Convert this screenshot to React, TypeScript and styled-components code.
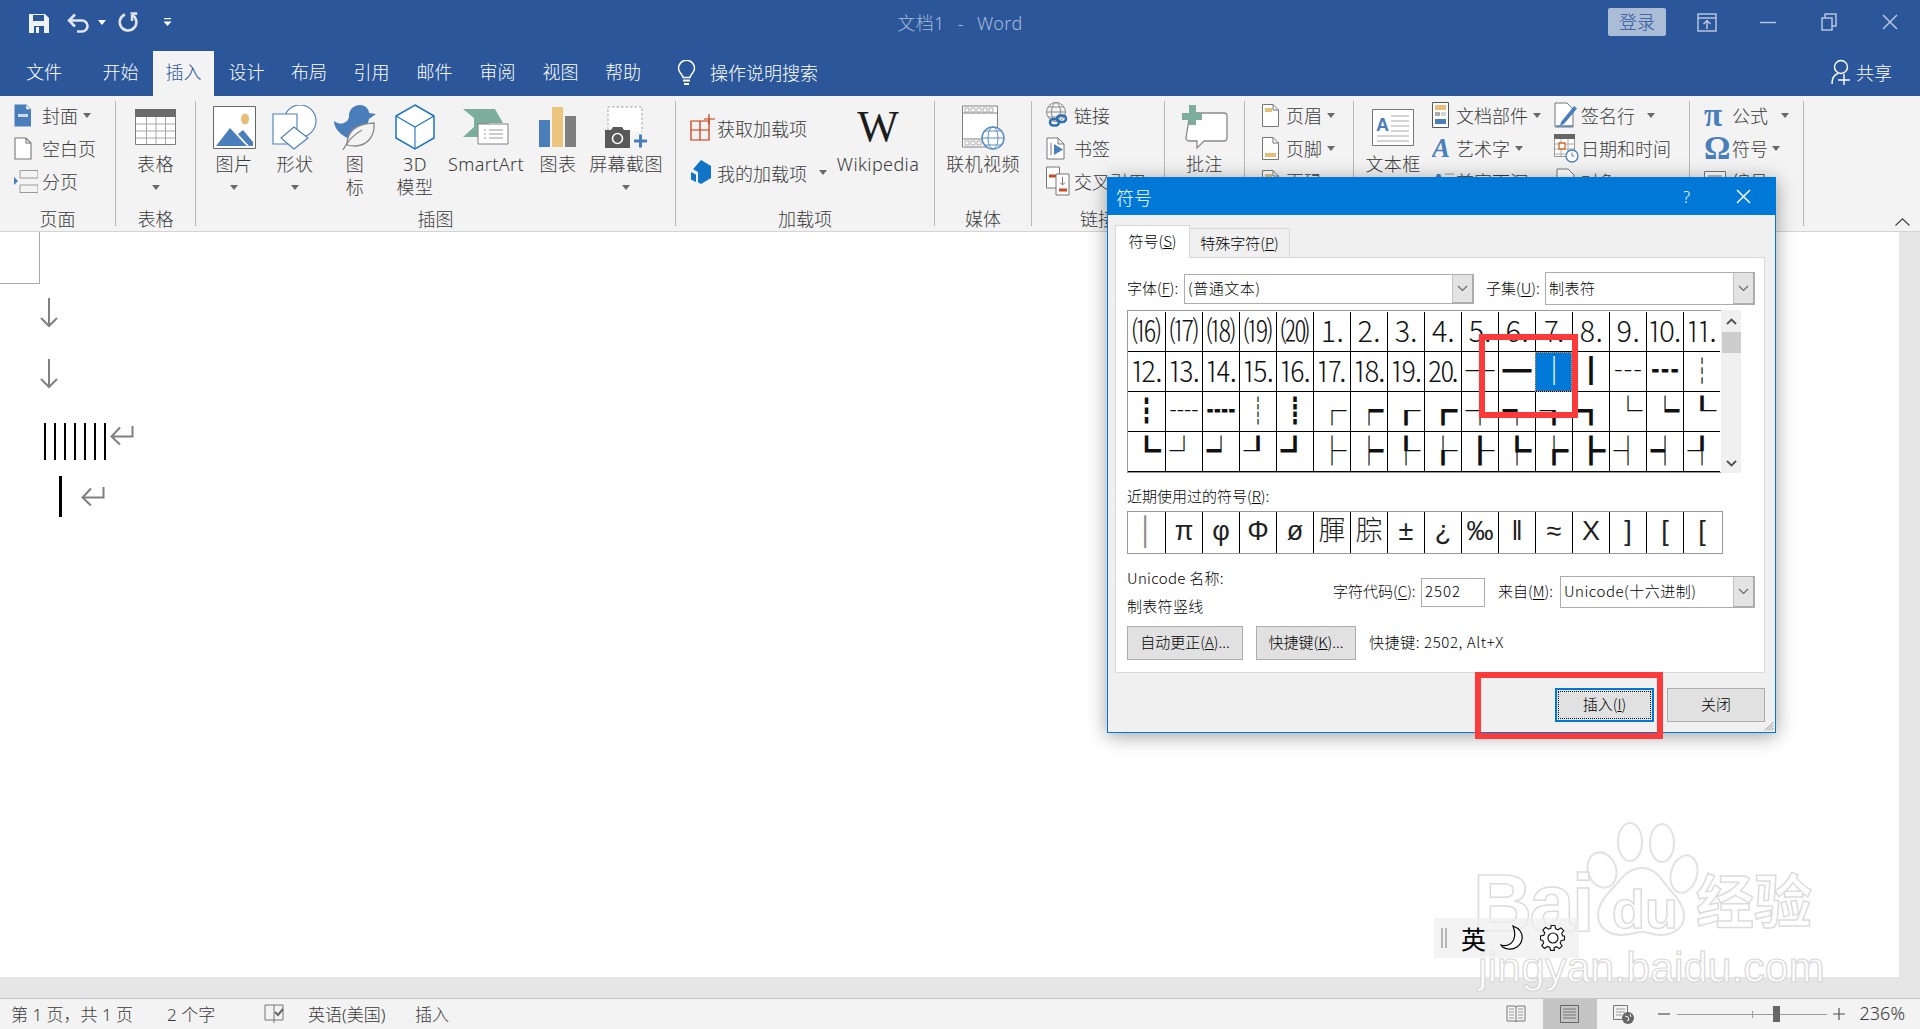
import React from "react";
import styled, { createGlobalStyle } from "styled-components";

const BLUE = "#4a7ebb";
const UI = `"Noto Sans", "Noto Sans CJK SC", sans-serif`;
const CJK = `"Noto Sans CJK SC", "Noto Sans", sans-serif`;

const Global = createGlobalStyle`
  html, body { margin: 0; padding: 0; background: #fff; overflow: hidden; }
  * { box-sizing: border-box; }
  svg { display: block; flex: none; }
`;

const Root = styled.div`
  position: relative;
  width: 1920px;
  height: 1029px;
  overflow: hidden;
  display: flex;
  flex-direction: column;
  font-family: ${UI};
  font-weight: 300;
  color: #3a3a3a;
`;

/* ---------- title bar ---------- */
const TitleBar = styled.div`
  height: 51px;
  background: #2b579a;
  display: grid;
  grid-template-columns: 1fr auto 1fr;
  align-items: center;
`;
const Qat = styled.div`
  display: flex;
  align-items: center;
  padding-left: 29px;
  margin-top: -6px;
`;
const QatSlot = styled.div<{ $ml: number }>`
  margin-left: ${(p) => p.$ml}px;
`;
const DocTitle = styled.div`
  color: #a6b9d6;
  font-size: 18px;
  margin-top: -7px;
  word-spacing: 8px;
  letter-spacing: 0.4px;
`;
const WinControls = styled.div`
  display: flex;
  align-items: center;
  justify-content: flex-end;
  margin-top: -7px;
`;
const LoginBtn = styled.div`
  width: 58px;
  height: 28px;
  background: #aabcd6;
  border-radius: 2px;
  color: #2b579a;
  font-size: 18px;
  line-height: 28px;
  text-align: center;
  margin-right: 10px;
`;
const WinSlot = styled.div`
  width: 61px;
  display: flex;
  justify-content: center;
`;

/* ---------- tabs ---------- */
const TabBar = styled.div`
  height: 45px;
  background: #2b579a;
  display: flex;
  align-items: stretch;
  color: #fff;
  font-size: 18px;
`;
const Tab = styled.div<{ $w: number; $active?: boolean }>`
  width: ${(p) => p.$w}px;
  text-align: center;
  line-height: 42px;
  background: ${(p) => (p.$active ? "#f3f3f3" : "transparent")};
  color: ${(p) => (p.$active ? "#2b579a" : "#fff")};
`;
const Search = styled.div`
  display: flex;
  align-items: center;
  height: 42px;
  margin-left: 22px;
  gap: 14px;
`;
const Share = styled.div`
  margin-left: auto;
  display: flex;
  align-items: center;
  height: 42px;
  gap: 6px;
  padding-right: 28px;
`;

/* ---------- ribbon ---------- */
const Ribbon = styled.div`
  height: 136px;
  background: #f3f3f3;
  border-bottom: 1px solid #d4d4d4;
  display: flex;
  padding-top: 5px;
  font-size: 18px;
  white-space: nowrap;
`;
const Group = styled.div<{ $w: number }>`
  width: ${(p) => p.$w}px;
  height: 125px;
  border-right: 1px solid #b9b9b9;
  display: flex;
  flex-direction: column;
  flex: none;
`;
const GroupBody = styled.div`
  height: 108px;
  flex: none;
  display: flex;
`;
const GroupLabel = styled.div`
  height: 20px;
  flex: none;
  line-height: 20px;
  text-align: center;
`;
const RibbonEnd = styled.div`
  flex: 1;
  height: 125px;
  display: flex;
  align-items: flex-end;
  padding: 0 0 0 91px;
`;
const SmallCol = styled.div<{ $w?: number; $pl?: number }>`
  display: flex;
  flex-direction: column;
  width: ${(p) => (p.$w ? `${p.$w}px` : "auto")};
  padding-left: ${(p) => p.$pl ?? 0}px;
  flex: none;
`;
const SmallRow = styled.div`
  height: 33px;
  padding-bottom: 5px;
  display: flex;
  align-items: center;
`;
const IconSlot = styled.div<{ $w: number }>`
  width: ${(p) => p.$w}px;
  flex: none;
  display: flex;
  align-items: center;
`;
const Caret = styled.span<{ $ml?: number }>`
  display: inline-block;
  width: 0;
  height: 0;
  border-left: 4.5px solid transparent;
  border-right: 4.5px solid transparent;
  border-top: 5px solid #6a6a6a;
  margin-left: ${(p) => p.$ml ?? 5}px;
`;
const Large = styled.div<{ $w: number }>`
  width: ${(p) => p.$w}px;
  flex: none;
  display: flex;
  flex-direction: column;
  align-items: center;
`;
const LargeIcon = styled.div`
  height: 52px;
  flex: none;
  display: flex;
  align-items: center;
  justify-content: center;
`;
const LargeLine = styled.div`
  height: 23px;
  flex: none;
  line-height: 23px;
  text-align: center;
  display: flex;
  align-items: center;
  letter-spacing: 0.4px;
`;
const TallRow = styled.div`
  height: 45px;
  display: flex;
  align-items: center;
`;
const AddinCol = styled.div`
  width: 162px;
  padding: 4px 0 0 14px;
  flex: none;
`;
const WikiW = styled.div`
  font-family: "Liberation Serif", serif;
  font-size: 44px;
  font-weight: 400;
  color: #1c1c1c;
  line-height: 52px;
`;
const MathGlyph = styled.span`
  font-family: "Liberation Serif", serif;
  font-weight: 700;
  color: ${BLUE};
  font-size: 33px;
  line-height: 28px;
`;

/* ---------- document ---------- */
const Work = styled.div`
  height: 745px;
  flex: none;
  display: flex;
`;
const Page = styled.div`
  flex: 1;
  background: #fff;
`;
const VScroll = styled.div`
  width: 21px;
  background: #e6e6e6;
`;
const HScroll = styled.div`
  height: 21px;
  flex: none;
  background: #e6e6e6;
`;
const Corner = styled.div`
  width: 40px;
  height: 52px;
  border-right: 1px solid #aaa;
  border-bottom: 1px solid #aaa;
`;
const ArrowLine = styled.div<{ $mt: number; $h: number }>`
  margin: ${(p) => p.$mt}px 0 0 40px;
  height: ${(p) => p.$h}px;
`;
const BarLine = styled.div<{ $h: number; $ml: number; $gap: number; $mt?: number }>`
  height: ${(p) => p.$h}px;
  margin: ${(p) => p.$mt ?? 0}px 0 0 ${(p) => p.$ml}px;
  display: flex;
  gap: ${(p) => p.$gap}px;
  align-items: flex-start;
`;
const Bar = styled.div<{ $w: number; $h: number }>`
  width: ${(p) => p.$w}px;
  height: ${(p) => p.$h}px;
  background: #000;
`;
const ReturnSlot = styled.div<{ $ml: number; $mt: number }>`
  margin: ${(p) => p.$mt}px 0 0 ${(p) => p.$ml}px;
`;

/* ---------- status bar ---------- */
const Status = styled.div`
  height: 31px;
  flex: none;
  background: #f3f3f3;
  border-top: 1px solid #c6c6c6;
  display: flex;
  align-items: center;
  font-size: 17px;
  white-space: nowrap;
`;
const StatusItem = styled.div<{ $w: number; $pl?: number }>`
  width: ${(p) => p.$w}px;
  padding-left: ${(p) => p.$pl ?? 0}px;
  flex: none;
  display: flex;
  align-items: center;
  height: 100%;
  padding-bottom: 2px;
`;
const StatusRight = styled.div`
  margin-left: auto;
  display: flex;
  align-items: center;
  height: 100%;
  padding-right: 15px;
`;
const ViewBtn = styled.div<{ $active?: boolean }>`
  width: 54px;
  height: 100%;
  background: ${(p) => (p.$active ? "#c5c5c5" : "transparent")};
  display: flex;
  align-items: center;
  justify-content: center;
`;
const ZoomMinus = styled.div`
  margin-left: 7px;
`;
const ZoomTrack = styled.div`
  position: relative;
  width: 150px;
  height: 1px;
  background: #9d9d9d;
  margin: 0 6px 0 7px;
`;
const ZoomTick = styled.div`
  position: absolute;
  left: 75px;
  top: -3px;
  width: 1px;
  height: 7px;
  background: #9d9d9d;
`;
const ZoomThumb = styled.div`
  position: absolute;
  left: 96px;
  top: -8px;
  width: 7px;
  height: 16px;
  background: #666;
`;
const ZoomPct = styled.div`
  margin-left: 15px;
  font-size: 18px;
  padding-bottom: 2px;
`;

/* ---------- dialog ---------- */
const Dialog = styled.div`
  position: absolute;
  left: 1107px;
  top: 177px;
  width: 669px;
  height: 556px;
  background: #f0f0f0;
  border: 1px solid #0078d7;
  box-shadow: 0 3px 18px rgba(0, 0, 0, 0.38);
  color: #000;
  font-size: 15px;
  font-family: ${CJK};
  font-weight: 300;
  white-space: nowrap;
`;
const DlgTitle = styled.div`
  height: 37px;
  background: #0078d7;
  color: #fff;
  font-size: 18px;
  display: flex;
  align-items: center;
  padding-left: 8px;
`;
const DlgHelp = styled.div`
  margin-left: auto;
  font-family: ${UI};
  font-size: 16px;
  margin-right: 46px;
`;
const DlgClose = styled.div`
  margin-right: 24px;
`;
const DlgTabs = styled.div`
  display: flex;
  align-items: flex-end;
  height: 32px;
  margin: 10px 0 0 7px;
`;
const DlgTab = styled.div<{ $w: number; $active?: boolean }>`
  width: ${(p) => p.$w}px;
  height: ${(p) => (p.$active ? 33 : 30)}px;
  background: ${(p) => (p.$active ? "#fff" : "#f0f0f0")};
  border: 1px solid #d9d9d9;
  border-bottom: ${(p) => (p.$active ? "none" : "1px solid #d9d9d9")};
  border-left: ${(p) => (p.$active ? "1px solid #d9d9d9" : "none")};
  text-align: center;
  line-height: ${(p) => (p.$active ? 30 : 27)}px;
  position: relative;
  z-index: 1;
  margin-bottom: -1px;
`;
const Panel = styled.div`
  width: 650px;
  height: 416px;
  margin: 0 0 0 7px;
  background: #fff;
  border: 1px solid #d9d9d9;
  padding: 14px 0 0 11px;
`;
const FieldRow = styled.div`
  display: flex;
  align-items: center;
  height: 33px;
`;
const FieldLabel = styled.div<{ $w: number; $ml?: number }>`
  width: ${(p) => p.$w}px;
  margin-left: ${(p) => p.$ml ?? 0}px;
  flex: none;
  line-height: 20px;
  padding-bottom: 2px;
  u { text-underline-offset: 2px; }
`;
const Select = styled.div<{ $w: number; $h: number }>`
  width: ${(p) => p.$w}px;
  height: ${(p) => p.$h}px;
  border: 1px solid #adadad;
  background: #fff;
  display: flex;
  align-items: center;
  padding-left: 3px;
  flex: none;
  font-size: 15px;
  letter-spacing: 0.5px;
`;
const SelectText = styled.span`
  padding-bottom: 3px;
`;
const SelectArrow = styled.div`
  margin-left: auto;
  width: 21px;
  height: 100%;
  background: #e3e3e3;
  border-left: 1px solid #c2c2c2;
  border-right: 1px solid #adadad;
  border-bottom: 1px solid #adadad;
  display: flex;
  align-items: center;
  justify-content: center;
`;
const GridWrap = styled.div`
  display: flex;
  margin-top: 5px;
`;
const SymbolGrid = styled.div`
  width: 594px;
  height: 163px;
  border: 1px solid #9a9a9a;
  border-right: none;
  padding: 1px 0;
  display: grid;
  grid-template-columns: repeat(16, 37px);
  grid-auto-rows: 40px;
`;
const Cell = styled.div<{ $sel?: boolean }>`
  border-left: 1px solid ${(p) => (p.$sel ? "#0078d7" : "#000")};
  border-bottom: 1px solid #000;
  background: ${(p) => (p.$sel ? "#0078d7" : "#fff")};
  color: ${(p) => (p.$sel ? "#fff" : "#111")};
  outline: ${(p) => (p.$sel ? "1px dotted #e8964a" : "none")};
  outline-offset: -1px;
  font-family: ${CJK};
  font-size: 29px;
  font-weight: 300;
  height: 40px;
  line-height: 35px;
  text-align: center;
  &:nth-child(16n + 1) { border-left: none; }
`;
const GridScroll = styled.div`
  width: 20px;
  height: 163px;
  background: #f0f0f0;
  display: flex;
  flex-direction: column;
  align-items: center;
  padding-top: 8px;
`;
const GridThumb = styled.div`
  width: 19px;
  height: 21px;
  background: #cdcdcd;
  margin-top: 7px;
`;
const GridDown = styled.div`
  margin-top: auto;
  padding-bottom: 6px;
`;
const RecentLabel = styled.div`
  height: 18px;
  line-height: 16px;
  margin-top: 15px;
`;
const RecentRow = styled.div`
  width: 596px;
  height: 43px;
  margin-top: 5px;
  border: 1px solid #9a9a9a;
  display: grid;
  grid-template-columns: repeat(16, 37px);
`;
const RecentCell = styled.div<{ $gray?: boolean }>`
  border-left: 1px solid #000;
  color: ${(p) => (p.$gray ? "#888" : "#222")};
  font-family: "Liberation Sans", ${CJK};
  font-size: 27px;
  line-height: 38px;
  height: 41px;
  text-align: center;
  &:first-child { border-left: none; }
`;
const InfoRow = styled.div`
  display: flex;
  align-items: center;
  height: 48px;
  margin-top: 14px;
`;
const InfoLeft = styled.div`
  width: 206px;
  flex: none;
  display: flex;
  flex-direction: column;
  gap: 12px;
  line-height: 16px;
  letter-spacing: 0.3px;
`;
const CodeInput = styled.div`
  width: 64px;
  height: 29px;
  border: 1px solid #adadad;
  background: #fff;
  padding-left: 3px;
  line-height: 23px;
  font-size: 15px;
  letter-spacing: 1px;
  flex: none;
`;
const BtnRow = styled.div`
  display: flex;
  align-items: center;
  gap: 13px;
  height: 34px;
  margin-top: 10px;
`;
const DlgBtn = styled.div<{ $w: number }>`
  width: ${(p) => p.$w}px;
  height: 34px;
  background: #e1e1e1;
  border: 1px solid #adadad;
  text-align: center;
  line-height: 30px;
  flex: none;
`;
const DefaultBtn = styled(DlgBtn)`
  border: 2px solid #0078d7;
  outline: 1px dotted #111;
  outline-offset: -4px;
  line-height: 28px;
`;
const Shortcut = styled.div`
  letter-spacing: 0.6px;
  padding-bottom: 4px;
`;
const DlgFoot = styled.div`
  display: flex;
  justify-content: flex-end;
  gap: 13px;
  margin-top: 15px;
  padding-right: 10px;
`;
const Grip = styled.div`
  position: absolute;
  right: 1px;
  bottom: 1px;
`;

/* ---------- overlays ---------- */
const RedBox = styled.div<{ $x: number; $y: number; $w: number; $h: number }>`
  position: absolute;
  left: ${(p) => p.$x}px;
  top: ${(p) => p.$y}px;
  width: ${(p) => p.$w}px;
  height: ${(p) => p.$h}px;
  border: 6px solid #fc3a3a;
`;
const Ime = styled.div`
  position: absolute;
  left: 1434px;
  top: 918px;
  width: 145px;
  height: 40px;
  background: rgba(238, 238, 238, 0.72);
  display: flex;
  align-items: center;
  font-family: ${CJK};
  color: #000;
`;
const ImeGrip = styled.div`
  width: 6px;
  height: 20px;
  margin-left: 7px;
  border-left: 2px solid #b5b5b5;
  border-right: 2px solid #b5b5b5;
`;
const ImeChar = styled.div`
  font-size: 25px;
  margin-left: 14px;
  font-weight: 400;
`;
const ImeIcon = styled.div`
  margin-left: 14px;
`;
const Watermark = styled.div`
  position: absolute;
  left: 1470px;
  top: 820px;
  width: 360px;
  height: 170px;
  pointer-events: none;
`;
const WmPaw = styled.div`
  position: absolute;
  left: 102px;
  top: -2px;
`;
const WmText = styled.div<{ $x: number; $y: number; $fs: number }>`
  position: absolute;
  left: ${(p) => p.$x}px;
  top: ${(p) => p.$y}px;
  font-size: ${(p) => p.$fs}px;
  line-height: 1;
  font-family: "Liberation Sans", ${CJK};
  font-weight: 700;
  color: #fff;
  -webkit-text-stroke: 1.5px #dcdcdc;
  white-space: nowrap;
`;
const WmBai = styled(WmText)`
  letter-spacing: -3px;
`;
const WmThin = styled(WmText)`
  font-weight: 400;
  -webkit-text-stroke: 1.2px #d8d8d8;
`;

/* ---------- icons ---------- */
const Svg = ({ w, h, children }: { w: number; h: number; children: React.ReactNode }) => (
  <svg width={w} height={h} viewBox={`0 0 ${w} ${h}`} fill="none">
    {children}
  </svg>
);

const SaveIcon = () => (
  <Svg w={20} h={20}>
    <path d="M0 1h16l4 4v15H0z" fill="#eef1f6" />
    <path d="M4 2h11v6H4z" fill="#2b579a" />
    <path d="M5 13h10v7H5z" fill="#2b579a" />
    <path d="M7 14h3v6H7z" fill="#eef1f6" />
  </Svg>
);
const UndoIcon = () => (
  <Svg w={23} h={20}>
    <path d="M2 7.5h13a5.5 5.5 0 0 1 0 11H10M8 1.5 2 7.5l6 6" stroke="#dfe6f0" strokeWidth="2.6" />
  </Svg>
);
const RedoIcon = () => (
  <Svg w={20} h={21}>
    <path d="M7 2.5a8.3 8.3 0 1 0 7 .4" stroke="#dfe6f0" strokeWidth="2.6" />
    <path d="M12.5 1.5h5.5v1.5M14 3v6" stroke="#dfe6f0" strokeWidth="2.4" />
  </Svg>
);
const QatDown = () => (
  <Svg w={9} h={9}>
    <path d="M1 0.5h7" stroke="#fff" strokeWidth="1.4" />
    <path d="M0.5 3.5h8L4.5 8z" fill="#fff" />
  </Svg>
);
const SmallDown = () => (
  <Svg w={8} h={5}>
    <path d="M0 0h8L4 5z" fill="#fff" />
  </Svg>
);
const DisplayIcon = () => (
  <Svg w={20} h={19}>
    <path d="M1 1h18v17H1zM1 5h18" stroke="#b5c5dc" strokeWidth="1.5" />
    <path d="M10 16V8M6.5 11 10 7.5l3.5 3.5" stroke="#b5c5dc" strokeWidth="1.5" />
  </Svg>
);
const MinIcon = () => (
  <Svg w={16} h={3}>
    <path d="M0 1.5h16" stroke="#b5c5dc" strokeWidth="1.5" />
  </Svg>
);
const RestoreIcon = () => (
  <Svg w={16} h={18}>
    <path d="M1 5h10v12H1z" stroke="#b5c5dc" strokeWidth="1.5" />
    <path d="M4 5V1h11v12h-4" stroke="#b5c5dc" strokeWidth="1.5" />
  </Svg>
);
const CloseIcon = ({ c = "#b5c5dc", s = 16 }: { c?: string; s?: number }) => (
  <Svg w={s} h={s}>
    <path d={`M1 1 ${s - 1} ${s - 1}M${s - 1} 1 1 ${s - 1}`} stroke={c} strokeWidth="1.5" />
  </Svg>
);
const BulbIcon = () => (
  <Svg w={19} h={25}>
    <path d="M6 17.5c0-3-4.5-4.5-4.5-9.2a8 8 0 0 1 16 0c0 4.7-4.5 6.2-4.5 9.2z" stroke="#fff" strokeWidth="1.5" />
    <path d="M6 20.5h7M7 24h5" stroke="#fff" strokeWidth="2" />
  </Svg>
);
const PersonIcon = () => (
  <Svg w={19} h={26}>
    <circle cx="10" cy="8" r="6.5" stroke="#fff" strokeWidth="1.4" />
    <path d="M1 25c0-6 3-9.5 6-10.5" stroke="#fff" strokeWidth="1.4" />
    <path d="M7 21h12M13 15v11" stroke="#fff" strokeWidth="1.4" />
  </Svg>
);
const CoverIcon = () => (
  <Svg w={18} h={23}>
    <path d="M0.5 0.5H12l5 5v17H0.5z" fill={BLUE} />
    <path d="M12 0.5 17 5.5H12z" fill="#fff" stroke={BLUE} strokeWidth="0.6" />
    <path d="M4 10h10v3H4z" fill="#cfdcec" />
  </Svg>
);
const BlankIcon = () => (
  <Svg w={18} h={23}>
    <path d="M1 1h11l5 5v16H1zM12 1v5h5" stroke="#777" strokeWidth="1.1" fill="#fff" />
  </Svg>
);
const BreakIcon = () => (
  <Svg w={24} h={23}>
    <path d="M6 0.5h18M6 8h18M6 15h18M6 22.5h18" stroke="#9a9a9a" strokeWidth="1" />
    <path d="M6 0.5v7.5M24 0.5v7.5M6 15v8M24 15v8" stroke="#9a9a9a" strokeWidth="1" />
    <path d="M0 7v8l4-4z" fill={BLUE} />
  </Svg>
);
const TableIcon = () => (
  <Svg w={41} h={36}>
    <path d="M0.5 0.5h40v35h-40z" fill="#fff" stroke="#7f7f7f" />
    <path d="M0 0h41v8H0z" fill="#6b6b6b" />
    <path d="M1 15h39M1 22h39M1 29h39M11.5 8v27M21 8v27M30.5 8v27" stroke="#a6a6a6" />
  </Svg>
);
const PictureIcon = () => (
  <Svg w={43} h={43}>
    <path d="M0.5 0.5h42v42h-42z" fill="#fff" stroke="#666" />
    <ellipse cx="32" cy="13" rx="4" ry="5.5" fill="#e8bd7a" />
    <path d="M3 40 17 22l12 13 5 5z" fill={BLUE} />
    <path d="M25 28 30 24l10 12v4h-4z" fill={BLUE} />
  </Svg>
);
const ShapesIcon = () => (
  <Svg w={46} h={45}>
    <circle cx="28" cy="16" r="16" fill="#fff" stroke={BLUE} strokeWidth="1.1" />
    <path d="M1 9h24v30H1z" fill="#fff" stroke={BLUE} strokeWidth="1.1" />
    <path d="M22 22 36 33 22 44 9 33z" fill="#fff" stroke={BLUE} strokeWidth="1.1" />
  </Svg>
);
const IconsIcon = () => (
  <Svg w={42} h={46}>
    <path d="M0 17c4 3 7 3 10 2 2-1 5-3 5-7 0-6 4-11 11-11 5 0 9 4 9 8l7 1-7 5c-1 5-3 8-6 10-3 3-4 9-7 11-8 0-22-8-22-19z" fill={BLUE} />
    <path d="M13 41c0-12 7-21 27-22 1 13-6 22-18 23-3 0-6 0-9-1z" fill="#f3f3f3" stroke="#8a8a8a" strokeWidth="1.3" />
    <path d="M9 46c4-8 10-15 19-20" stroke="#8a8a8a" strokeWidth="1.3" />
  </Svg>
);
const CubeIcon = () => (
  <Svg w={40} h={46}>
    <path d="M20 1 39 12v22L20 45 1 34V12z" fill="#fff" stroke="#1f74bf" strokeWidth="1.5" />
    <path d="M1 12l19 11 19-11M20 23v22" stroke="#1f74bf" strokeWidth="1.1" />
  </Svg>
);
const SmartArtIcon = () => (
  <Svg w={46} h={36}>
    <path d="M0 0h32l8 14h-14v6H11V9z" fill="#7dae9d" />
    <path d="M0 28l11-10h4v10z" fill="#7dae9d" />
    <path d="M15 15h30v20H15z" fill="#fff" stroke="#808080" />
    <path d="M21 21h2M26 21h14M21 25h2M26 25h14M21 29h2M26 29h14" stroke="#999" />
  </Svg>
);
const ChartIcon = () => (
  <Svg w={38} h={40}>
    <path d="M0 13h11v27H0z" fill={BLUE} />
    <path d="M13 0h11v40H13z" fill="#ecc47e" />
    <path d="M26 9h11v31H26z" fill="#7f7f7f" />
  </Svg>
);
const ShotIcon = () => (
  <Svg w={42} h={42}>
    <path d="M3 24V1h34v25" fill="#fff" />
    <path d="M3 24V1h34v25" stroke="#a0a0a0" strokeDasharray="2.5 2" />
    <path d="M0 24h6l2-3h9l2 3h6v18H0z" fill="#595959" />
    <circle cx="12.5" cy="32.5" r="5" fill="#595959" stroke="#fff" strokeWidth="1.6" />
    <path d="M29 35h13M35.5 28.5v13" stroke={BLUE} strokeWidth="3" />
  </Svg>
);
const GetAddinIcon = () => (
  <Svg w={25} h={27}>
    <path d="M1 7h18v19H1zM10 7v19M1 16h18" stroke="#c9330b" strokeWidth="1.2" />
    <path d="M14 5h11M19 0v10" stroke="#c9330b" strokeWidth="1.2" />
  </Svg>
);
const MyAddinIcon = () => (
  <Svg w={22} h={25}>
    <path d="M11 0l10 6v12l-10 6-3-1.7V12L3 9.2z" fill="#1174c6" />
    <path d="M1 12l5 2.5V22l-5-2.5z" fill="#1174c6" />
  </Svg>
);
const VideoIcon = () => (
  <Svg w={43} h={45}>
    <path d="M0.5 1h35v41h-35z" fill="#fff" stroke="#808080" />
    <path d="M0.5 8h35M0.5 34h35" stroke="#808080" />
    <path d="M3 3h4v4H3zM9 3h4v4H9zM15 3h4v4h-4zM21 3h4v4h-4zM27 3h4v4h-4zM3 36h4v4H3zM9 36h4v4H9zM15 36h4v4h-4z" stroke="#999" strokeWidth="0.8" />
    <circle cx="31" cy="33" r="11" fill="#fff" stroke="#5b8ec4" strokeWidth="1.5" />
    <ellipse cx="31" cy="33" rx="5" ry="11" stroke="#5b8ec4" />
    <path d="M20 33h22M22 26h18M22 40h18" stroke="#5b8ec4" />
  </Svg>
);
const LinkIcon = () => (
  <Svg w={22} h={28}>
    <circle cx="10" cy="11" r="9.5" stroke="#8a8a8a" />
    <ellipse cx="10" cy="11" rx="4.5" ry="9.5" stroke="#8a8a8a" />
    <path d="M1 11h18M2 6h16M2 16h16" stroke="#8a8a8a" />
    <rect x="4" y="18" width="9" height="6.5" rx="3.2" stroke="#2f6fb0" strokeWidth="2.5" />
    <rect x="11" y="14.5" width="9" height="6.5" rx="3.2" stroke="#2f6fb0" strokeWidth="2.5" />
  </Svg>
);
const BookmarkIcon = () => (
  <Svg w={19} h={23}>
    <path d="M1 1h11l6 6v15H1zM12 1v6h6" fill="#fff" stroke="#777" />
    <path d="M5 6v12" stroke="#777" />
    <path d="M8 7v11l9-5.5z" fill={BLUE} />
  </Svg>
);
const CrossRefIcon = () => (
  <Svg w={24} h={30}>
    <path d="M0.5 1h13v21h-13z" fill="#fff" stroke="#777" />
    <path d="M3 10h8" stroke="#d24726" strokeWidth="3" />
    <path d="M10 8h13v21H10z" fill="#fff" stroke="#777" />
    <path d="M13 24h8" stroke="#d24726" strokeWidth="3" />
    <path d="M16.5 11v8M14 16.5l2.5 2.5 2.5-2.5" stroke="#777" />
  </Svg>
);
const CommentIcon = () => (
  <Svg w={46} h={44}>
    <path d="M8 8h34a3 3 0 0 1 3 3v22a3 3 0 0 1-3 3H22l-7 7v-7H7a3 3 0 0 1-3-3z" fill="#fff" stroke="#8a8a8a" strokeWidth="1.3" />
    <path d="M0 8h20v7H0zM7 0h7v20H7z" fill="#7dae9d" />
  </Svg>
);
const HeaderIcon = ({ bottom }: { bottom?: boolean }) => (
  <Svg w={17} h={23}>
    <path d="M0.5 0.5H11l5.5 5.5v16.5h-16z" fill="#fff" stroke="#777" />
    <path d="M11 0.5V6h5.5" stroke="#777" />
    <path d={bottom ? "M3 16h11v4H3z" : "M3 4h7v4H3z"} fill="#e8bd7a" />
  </Svg>
);
const TextBoxIcon = () => (
  <Svg w={42} h={37}>
    <path d="M0.5 0.5h41v36h-41z" fill="#fff" stroke="#777" />
    <path d="M19 7h18M19 12h18M19 17h18M19 22h18M5 27h32M5 32h32" stroke="#aaa" />
    <text x="4" y="22" fontFamily="Liberation Sans" fontWeight="700" fontSize="18" fill={BLUE}>A</text>
  </Svg>
);
const PartsIcon = () => (
  <Svg w={18} h={26}>
    <path d="M0.5 0.5h16v25h-16z" fill="#fff" stroke="#555" />
    <path d="M3 3h11v5H3z" fill="#e8bd7a" />
    <path d="M3 10h5v4H3z" fill="#aaa" />
    <path d="M9 11h5M9 13h5" stroke="#aaa" />
    <path d="M3 17h11v5H3z" fill={BLUE} />
  </Svg>
);
const WordArtIcon = () => (
  <Svg w={18} h={24}>
    <text x="0" y="21" fontFamily="Liberation Serif" fontStyle="italic" fontWeight="700" fontSize="27" fill={BLUE}>A</text>
  </Svg>
);
const DropCapIcon = () => (
  <Svg w={22} h={22}>
    <text x="0" y="17" fontFamily="Liberation Sans" fontWeight="700" fontSize="18" fill={BLUE}>A</text>
    <path d="M13 4h9M13 9h9M13 14h9" stroke="#999" />
  </Svg>
);
const SignIcon = () => (
  <Svg w={24} h={26}>
    <path d="M1 1h12l6 6v18H1z" fill="#fff" stroke="#777" />
    <path d="M7 20 20 4l3 2.5L10 22l-4 1.5z" fill={BLUE} />
    <path d="M2 24h17" stroke={BLUE} strokeWidth="1.5" />
  </Svg>
);
const DateIcon = () => (
  <Svg w={25} h={29}>
    <path d="M0.5 0.5h20v22h-20z" fill="#fff" stroke="#999" />
    <path d="M0 0h21v5H0z" fill="#666" />
    <path d="M1 10h19M1 15h19M1 20h19M7 5v17M14 5v17" stroke="#aaa" />
    <path d="M5 9h6v6H5z" fill="#fff" stroke="#d2691e" strokeWidth="1.3" />
    <circle cx="18" cy="22" r="6" fill="#fff" stroke={BLUE} strokeWidth="1.3" />
    <path d="M18 18.5V22h2.5" stroke={BLUE} />
  </Svg>
);
const ObjectIcon = () => (
  <Svg w={22} h={26}>
    <path d="M3 1h11l6 6v14H3z" fill="#fff" stroke="#777" />
    <path d="M0 10h12v14H0z" fill="#fff" stroke="#777" />
  </Svg>
);
const NumberIcon = () => (
  <Svg w={22} h={20}>
    <path d="M0.5 0.5h21v19h-21z" fill="#fff" stroke="#777" />
    <path d="M4 5h14" stroke="#777" />
  </Svg>
);
const CollapseIcon = () => (
  <Svg w={15} h={8}>
    <path d="M0.5 7.5 7.5 0.8l7 6.7" stroke="#444" strokeWidth="1.2" />
  </Svg>
);
const DownArrow = () => (
  <Svg w={18} h={30}>
    <path d="M9 0v28M1 20l8 8 8-8" stroke="#808080" strokeWidth="2" />
  </Svg>
);
const ReturnArrow = () => (
  <Svg w={24} h={20}>
    <path d="M22.5 0v10.5H2M10 1.5 1.5 10.5 10 18.5" stroke="#808080" strokeWidth="2" />
  </Svg>
);
const Chevron = () => (
  <Svg w={11} h={7}>
    <path d="M1 1l4.5 4.5L10 1" stroke="#666" strokeWidth="1.1" />
  </Svg>
);
const ScrollUp = () => (
  <Svg w={11} h={7}>
    <path d="M1 6l4.5-4.5L10 6" stroke="#505050" strokeWidth="1.8" />
  </Svg>
);
const ScrollDown = () => (
  <Svg w={11} h={7}>
    <path d="M1 1l4.5 4.5L10 1" stroke="#505050" strokeWidth="1.8" />
  </Svg>
);
const GripIcon = () => (
  <Svg w={10} h={10}>
    <path d="M9.5 1 1 9.5M9.5 4 4 9.5M9.5 7 7 9.5" stroke="#8f8f8f" />
  </Svg>
);
const MoonIcon = () => (
  <Svg w={26} h={26}>
    <path d="M13 1c6 2 10 7 9 13-1 7-8 11-14 10-3-.5-6-2-7-4 3 1 6 1 9-1 5-3 6-11 3-18z" fill="#fff" stroke="#000" strokeWidth="1.2" />
  </Svg>
);
const GearIcon = () => (
  <Svg w={26} h={26}>
    <path d="M11 1h4l.8 3.5 2.5 1 3-2 2.8 2.8-2 3 1 2.5L25 12v4l-3.5.8-1 2.5 2 3-2.8 2.8-3-2-2.5 1L14.500 27h-4l-.8-3.100-2.500-1-3 2-2.800-2.800 2-3-1-2.500L0 16v-4l3.500-.8 1-2.500-2-3 2.800-2.800 3 2 2.500-1z" transform="scale(.96) translate(.5 -.5)" stroke="#111" strokeWidth="1.2" fill="#fff" />
    <circle cx="13" cy="13" r="5" stroke="#111" strokeWidth="1.2" />
  </Svg>
);
const ProofIcon = () => (
  <Svg w={21} h={20}>
    <path d="M1 2h9v15H1zM10 2h9v15h-9M10 17v3" stroke="#777" />
    <path d="M11 9l3 3 5-6" stroke="#666" strokeWidth="2" />
  </Svg>
);
const ReadIcon = () => (
  <Svg w={20} h={18}>
    <path d="M1 1h8l1 1 1-1h8v15h-8l-1 1-1-1H1zM10 2v15" stroke="#777" />
    <path d="M3 4h5M3 7h5M3 10h5M3 13h5M12 4h5M12 7h5M12 10h5M12 13h5" stroke="#999" />
  </Svg>
);
const PrintIcon = () => (
  <Svg w={19} h={18}>
    <path d="M0.5 0.5h18v17h-18z" stroke="#666" />
    <path d="M3 4h13M3 7h13M3 10h13M3 13h13" stroke="#777" />
  </Svg>
);
const WebIcon = () => (
  <Svg w={21} h={19}>
    <path d="M0.5 0.5h14v14h-14z" stroke="#777" />
    <path d="M3 4h9M3 7h9M3 10h6" stroke="#999" />
    <circle cx="15" cy="13" r="6" fill="#666" />
    <path d="M12 11l3 1 1 3-2 1M17 9l1 3" stroke="#f3f3f3" />
  </Svg>
);
const PlusMinus = ({ plus }: { plus?: boolean }) => (
  <Svg w={12} h={12}>
    <path d={plus ? "M0 6h12M6 0v12" : "M0 6h12"} stroke="#555" strokeWidth="1.2" />
  </Svg>
);
const Paw = () => (
  <svg width="130" height="125" viewBox="0 0 130 125" fill="#fff" stroke="#e2e2e2" strokeWidth="2">
    <ellipse cx="30" cy="52" rx="14" ry="18" transform="rotate(-20 30 52)" />
    <ellipse cx="58" cy="24" rx="12" ry="19" />
    <ellipse cx="90" cy="25" rx="12" ry="19" />
    <ellipse cx="112" cy="56" rx="13" ry="19" transform="rotate(15 112 56)" />
    <path d="M70 50c14 0 20 12 28 22 10 10 14 18 14 26 0 13-12 19-24 19-8 0-12-3-18-3s-12 3-20 3c-13 0-24-7-24-20 0-9 5-17 14-26 9-9 15-21 30-21z" />
  </svg>
);

/* ---------- data ---------- */
const tabs: [string, number, boolean?][] = [
  ["文件", 88], ["开始", 65], ["插入", 61, true], ["设计", 65], ["布局", 60], ["引用", 65],
  ["邮件", 61], ["审阅", 65], ["视图", 61], ["帮助", 64],
];
const rows = [
  "⒃⒄⒅⒆⒇⒈⒉⒊⒋⒌⒍⒎⒏⒐⒑⒒",
  "⒓⒔⒕⒖⒗⒘⒙⒚⒛─━│┃┄┅┆",
  "┇┈┉┊┋┌┍┎┏┐┑┒┓└┕┖",
  "┗┘┙┚┛├┝┞┟┠┡┢┣┤┥┦",
];
const recent = ["│", "π", "φ", "Φ", "ø", "腪", "腙", "±", "¿", "‰", "‖", "≈", "X", "]", "[", "["];
const groupsSmall = {
  pages: [
    { icon: <CoverIcon />, label: "封面", caret: true },
    { icon: <BlankIcon />, label: "空白页" },
    { icon: <BreakIcon />, label: "分页" },
  ],
  links: [
    { icon: <LinkIcon />, label: "链接" },
    { icon: <BookmarkIcon />, label: "书签" },
    { icon: <CrossRefIcon />, label: "交叉引用" },
  ],
  head: [
    { icon: <HeaderIcon />, label: "页眉", caret: true },
    { icon: <HeaderIcon bottom />, label: "页脚", caret: true },
    { icon: <HeaderIcon />, label: "页码", caret: true },
  ],
  text1: [
    { icon: <PartsIcon />, label: "文档部件", caret: true },
    { icon: <WordArtIcon />, label: "艺术字", caret: true },
    { icon: <DropCapIcon />, label: "首字下沉", caret: true },
  ],
};

const SmallList = ({ items, slot }: { items: { icon: React.ReactNode; label: string; caret?: boolean }[]; slot: number }) => (
  <>
    {items.map((it) => (
      <SmallRow key={it.label}>
        <IconSlot $w={slot}>{it.icon}</IconSlot>
        {it.label}
        {it.caret && <Caret />}
      </SmallRow>
    ))}
  </>
);

const LargeBtn = ({ w, icon, lines, caret }: { w: number; icon: React.ReactNode; lines: string[]; caret?: boolean }) => (
  <Large $w={w}>
    <LargeIcon>{icon}</LargeIcon>
    {lines.map((l) => (
      <LargeLine key={l}>{l}</LargeLine>
    ))}
    {caret && (
      <LargeLine>
        <Caret $ml={0} />
      </LargeLine>
    )}
  </Large>
);

export default function App() {
  return (
    <Root>
      <Global />
      <TitleBar>
        <Qat>
          <SaveIcon />
          <QatSlot $ml={18}><UndoIcon /></QatSlot>
          <QatSlot $ml={8}><SmallDown /></QatSlot>
          <QatSlot $ml={12}><RedoIcon /></QatSlot>
          <QatSlot $ml={25}><QatDown /></QatSlot>
        </Qat>
        <DocTitle>文档1 - Word</DocTitle>
        <WinControls>
          <LoginBtn>登录</LoginBtn>
          <WinSlot><DisplayIcon /></WinSlot>
          <WinSlot><MinIcon /></WinSlot>
          <WinSlot><RestoreIcon /></WinSlot>
          <WinSlot><CloseIcon /></WinSlot>
        </WinControls>
      </TitleBar>
      <TabBar>
        {tabs.map(([t, w, a]) => (
          <Tab key={t} $w={w} $active={a}>{t}</Tab>
        ))}
        <Search>
          <BulbIcon />
          操作说明搜索
        </Search>
        <Share>
          <PersonIcon />
          共享
        </Share>
      </TabBar>
      <Ribbon>
        <Group $w={116}>
          <GroupBody>
            <SmallCol $pl={14}>
              <SmallList items={groupsSmall.pages} slot={28} />
            </SmallCol>
          </GroupBody>
          <GroupLabel>页面</GroupLabel>
        </Group>
        <Group $w={80}>
          <GroupBody>
            <LargeBtn w={79} icon={<TableIcon />} lines={["表格"]} caret />
          </GroupBody>
          <GroupLabel>表格</GroupLabel>
        </Group>
        <Group $w={480}>
          <GroupBody>
            <LargeBtn w={76} icon={<PictureIcon />} lines={["图片"]} caret />
            <LargeBtn w={46} icon={<ShapesIcon />} lines={["形状"]} caret />
            <LargeBtn w={74} icon={<IconsIcon />} lines={["图", "标"]} />
            <LargeBtn w={46} icon={<CubeIcon />} lines={["3D", "模型"]} />
            <LargeBtn w={96} icon={<SmartArtIcon />} lines={["SmartArt"]} />
            <LargeBtn w={48} icon={<ChartIcon />} lines={["图表"]} />
            <LargeBtn w={88} icon={<ShotIcon />} lines={["屏幕截图"]} caret />
          </GroupBody>
          <GroupLabel>插图</GroupLabel>
        </Group>
        <Group $w={259}>
          <GroupBody>
            <AddinCol>
              <TallRow>
                <IconSlot $w={27}><GetAddinIcon /></IconSlot>
                获取加载项
              </TallRow>
              <TallRow>
                <IconSlot $w={27}><MyAddinIcon /></IconSlot>
                我的加载项
                <Caret $ml={12} />
              </TallRow>
            </AddinCol>
            <Large $w={80}>
              <LargeIcon><WikiW>W</WikiW></LargeIcon>
              <LargeLine>Wikipedia</LargeLine>
            </Large>
          </GroupBody>
          <GroupLabel>加载项</GroupLabel>
        </Group>
        <Group $w={97}>
          <GroupBody>
            <LargeBtn w={96} icon={<VideoIcon />} lines={["联机视频"]} />
          </GroupBody>
          <GroupLabel>媒体</GroupLabel>
        </Group>
        <Group $w={133}>
          <GroupBody>
            <SmallCol $pl={14}>
              <SmallList items={groupsSmall.links} slot={28} />
            </SmallCol>
          </GroupBody>
          <GroupLabel>链接</GroupLabel>
        </Group>
        <Group $w={80}>
          <GroupBody>
            <LargeBtn w={79} icon={<CommentIcon />} lines={["批注"]} />
          </GroupBody>
          <GroupLabel>批注</GroupLabel>
        </Group>
        <Group $w={109}>
          <GroupBody>
            <SmallCol $pl={17}>
              <SmallList items={groupsSmall.head} slot={24} />
            </SmallCol>
          </GroupBody>
          <GroupLabel>页眉和页脚</GroupLabel>
        </Group>
        <Group $w={336}>
          <GroupBody>
            <LargeBtn w={78} icon={<TextBoxIcon />} lines={["文本框"]} caret />
            <SmallCol $w={122}>
              <SmallList items={groupsSmall.text1} slot={24} />
            </SmallCol>
            <SmallCol>
              <SmallRow>
                <IconSlot $w={27}><SignIcon /></IconSlot>
                签名行
                <Caret $ml={12} />
              </SmallRow>
              <SmallRow>
                <IconSlot $w={27}><DateIcon /></IconSlot>
                日期和时间
              </SmallRow>
              <SmallRow>
                <IconSlot $w={27}><ObjectIcon /></IconSlot>
                对象
                <Caret />
              </SmallRow>
            </SmallCol>
          </GroupBody>
          <GroupLabel>文本</GroupLabel>
        </Group>
        <Group $w={114}>
          <GroupBody>
            <SmallCol $pl={14}>
              <SmallRow>
                <IconSlot $w={28}><MathGlyph>π</MathGlyph></IconSlot>
                公式
                <Caret $ml={13} />
              </SmallRow>
              <SmallRow>
                <IconSlot $w={28}><MathGlyph>Ω</MathGlyph></IconSlot>
                符号
                <Caret $ml={4} />
              </SmallRow>
              <SmallRow>
                <IconSlot $w={28}><NumberIcon /></IconSlot>
                编号
              </SmallRow>
            </SmallCol>
          </GroupBody>
          <GroupLabel>符号</GroupLabel>
        </Group>
        <RibbonEnd>
          <CollapseIcon />
        </RibbonEnd>
      </Ribbon>
      <Work>
        <Page>
          <Corner />
          <ArrowLine $mt={14} $h={31}><DownArrow /></ArrowLine>
          <ArrowLine $mt={30} $h={31}><DownArrow /></ArrowLine>
          <BarLine $h={53} $ml={44} $gap={8} $mt={33}>
            {Array.from({ length: 7 }).map((_, i) => (
              <Bar key={i} $w={2} $h={37} />
            ))}
            <ReturnSlot $ml={-4} $mt={3}><ReturnArrow /></ReturnSlot>
          </BarLine>
          <BarLine $h={41} $ml={59} $gap={0}>
            <Bar $w={3} $h={41} />
            <ReturnSlot $ml={19} $mt={11}><ReturnArrow /></ReturnSlot>
          </BarLine>
        </Page>
        <VScroll />
      </Work>
      <HScroll />
      <Status>
        <StatusItem $w={167} $pl={11}>第 1 页，共 1 页</StatusItem>
        <StatusItem $w={97}>2 个字</StatusItem>
        <StatusItem $w={44}><ProofIcon /></StatusItem>
        <StatusItem $w={107}>英语(美国)</StatusItem>
        <StatusItem $w={50}>插入</StatusItem>
        <StatusRight>
          <ViewBtn><ReadIcon /></ViewBtn>
          <ViewBtn $active><PrintIcon /></ViewBtn>
          <ViewBtn><WebIcon /></ViewBtn>
          <ZoomMinus><PlusMinus /></ZoomMinus>
          <ZoomTrack>
            <ZoomTick />
            <ZoomThumb />
          </ZoomTrack>
          <PlusMinus plus />
          <ZoomPct>236%</ZoomPct>
        </StatusRight>
      </Status>

      <Watermark>
        <WmPaw><Paw /></WmPaw>
        <WmBai $x={3} $y={42} $fs={82}>Bai</WmBai>
        <WmText $x={142} $y={62} $fs={54}>du</WmText>
        <WmText $x={226} $y={54} $fs={58}>经验</WmText>
        <WmThin $x={8} $y={126} $fs={43}>jingyan.baidu.com</WmThin>
      </Watermark>

      <Ime>
        <ImeGrip />
        <ImeChar>英</ImeChar>
        <ImeIcon><MoonIcon /></ImeIcon>
        <ImeIcon><GearIcon /></ImeIcon>
      </Ime>

      <Dialog>
        <DlgTitle>
          符号
          <DlgHelp>?</DlgHelp>
          <DlgClose><CloseIcon c="#fff" s={15} /></DlgClose>
        </DlgTitle>
        <DlgTabs>
          <DlgTab $w={75} $active>符号(<u>S</u>)</DlgTab>
          <DlgTab $w={100}>特殊字符(<u>P</u>)</DlgTab>
        </DlgTabs>
        <Panel>
          <FieldRow>
            <FieldLabel $w={57}>字体(<u>F</u>):</FieldLabel>
            <Select $w={290} $h={30}>
              <SelectText>(普通文本)</SelectText>
              <SelectArrow><Chevron /></SelectArrow>
            </Select>
            <FieldLabel $w={59} $ml={12}>子集(<u>U</u>):</FieldLabel>
            <Select $w={210} $h={33}>
              <SelectText>制表符</SelectText>
              <SelectArrow><Chevron /></SelectArrow>
            </Select>
          </FieldRow>
          <GridWrap>
            <SymbolGrid>
              {rows.flatMap((r, ri) =>
                Array.from(r).map((c, ci) => (
                  <Cell key={`${ri}-${ci}`} $sel={ri === 1 && ci === 11}>{c}</Cell>
                ))
              )}
            </SymbolGrid>
            <GridScroll>
              <ScrollUp />
              <GridThumb />
              <GridDown><ScrollDown /></GridDown>
            </GridScroll>
          </GridWrap>
          <RecentLabel>近期使用过的符号(<u>R</u>):</RecentLabel>
          <RecentRow>
            {recent.map((c, i) => (
              <RecentCell key={i} $gray={i === 0}>{c}</RecentCell>
            ))}
          </RecentRow>
          <InfoRow>
            <InfoLeft>
              <div>Unicode 名称:</div>
              <div>制表符竖线</div>
            </InfoLeft>
            <FieldLabel $w={88}>字符代码(<u>C</u>):</FieldLabel>
            <CodeInput>2502</CodeInput>
            <FieldLabel $w={62} $ml={13}>来自(<u>M</u>):</FieldLabel>
            <Select $w={195} $h={32}>
              <SelectText>Unicode(十六进制)</SelectText>
              <SelectArrow><Chevron /></SelectArrow>
            </Select>
          </InfoRow>
          <BtnRow>
            <DlgBtn $w={116}>自动更正(<u>A</u>)...</DlgBtn>
            <DlgBtn $w={100}>快捷键(<u>K</u>)...</DlgBtn>
            <Shortcut>快捷键: 2502, Alt+X</Shortcut>
          </BtnRow>
        </Panel>
        <DlgFoot>
          <DefaultBtn $w={99}>插入(<u>I</u>)</DefaultBtn>
          <DlgBtn $w={98}>关闭</DlgBtn>
        </DlgFoot>
        <Grip><GripIcon /></Grip>
      </Dialog>

      <RedBox $x={1479} $y={334} $w={99} $h={84} />
      <RedBox $x={1475} $y={672} $w={188} $h={67} />
    </Root>
  );
}
